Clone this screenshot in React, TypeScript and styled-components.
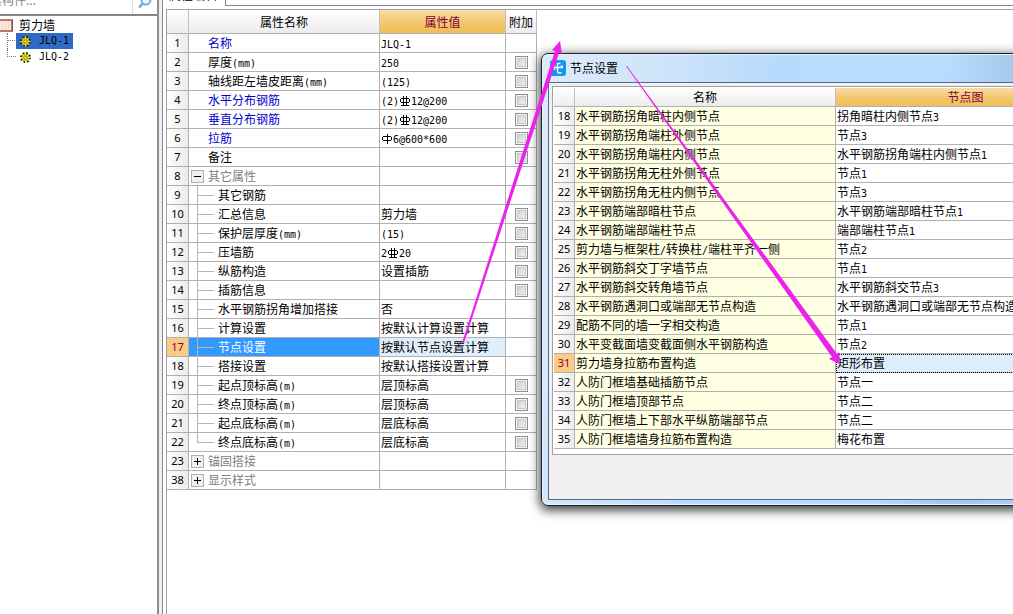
import React from 'react';
import styled, { createGlobalStyle, css } from 'styled-components';

const GlobalStyle = createGlobalStyle`
  * { box-sizing: border-box; }
  html, body, #root { height: 100%; }
  body {
    margin: 0;
    overflow: hidden;
    background: #fff;
    color: #000;
    font: 12px/18px "Noto Sans CJK SC", "Liberation Sans", sans-serif;
  }
`;

const Half = styled.span`
  font-family: "DejaVu Sans Mono", monospace;
  font-size: 10px;
  line-height: 1;
`;

const Symbol = styled.svg`
  width: 12px;
  height: 12px;
  vertical-align: -2px;
  fill: none;
  stroke: currentColor;
  shape-rendering: crispEdges;
`;

const Rebar = ({ grade }: { grade: number }) => (
  <Symbol viewBox="0 0 12 12" role="img" aria-label={`grade ${grade} rebar`}>
    {grade === 1 ? (
      <path d="M2 3.5h8M2 7.5h8M1.5 4v3M10.5 4v3M6.5 1v10" />
    ) : (
      <path d="M2 3.5h8M2 7.5h8M1.5 4v3M10.5 4v3M4.5 1v9M7.5 1v9M2 10.5h8" />
    )}
  </Symbol>
);

/* Half-width characters take half the cell of a Chinese character. "%1" and "%2" stand for the rebar grades. */
const Mixed = ({ text }: { text: string }) => (
  <>
    {text.split(/(%[12]|[\x20-\x7e]+?(?=%|[^\x20-\x7e]|$))/).map((part, i) => {
      if (part === '%1' || part === '%2') return <Rebar key={i} grade={Number(part[1])} />;
      return /^[\x20-\x7e]+$/.test(part) ? <Half key={i}>{part}</Half> : part;
    })}
  </>
);

const Page = styled.div`
  position: relative;
  display: flex;
  height: 100%;
  overflow: hidden;
  background: #f0f0f0;
`;

const Sidebar = styled.aside`
  flex: none;
  width: 159px;
  border-right: 2px solid #8c8c94;
  background: #fff;
`;

const SearchBar = styled.div`
  display: flex;
  height: 16px;
  overflow: hidden;
  align-items: flex-end;
  border-bottom: 2px solid #85858d;
`;

const SearchInput = styled.input`
  flex: 1;
  min-width: 0;
  height: 24px;
  padding: 0 0 6px;
  margin: 0 0 0 -10px;
  border: 0;
  outline: 0;
  font: 12px/18px "Noto Sans CJK SC", sans-serif;
  &::placeholder { color: #808080; opacity: 1; }
`;

const SearchButton = styled.button`
  width: 25px;
  height: 21px;
  padding: 0 0 4px;
  border: 0;
  border-left: 1px solid #ddd;
  background: #fff;
  svg { display: block; margin: 0 auto; }
`;

const Tree = styled.ul`
  margin: 0;
  padding: 1px 0 0;
  list-style: none;
`;

const TreeRow = styled.li`
  display: flex;
  align-items: center;
  height: 16px;
  line-height: 16px;
`;

const RootLabel = styled.span`
  margin-left: 6px;
`;

const Branch = styled.span<{ $last?: boolean }>`
  align-self: ${p => (p.$last ? 'flex-start' : 'stretch')};
  width: 9px;
  height: ${p => (p.$last ? '8px' : 'auto')};
  margin-left: 7px;
  border-left: 1px dotted #777;
  ${p =>
    p.$last
      ? css`border-bottom: 1px dotted #777;`
      : css`background: repeating-linear-gradient(90deg, #777 0 1px, #fff 1px 2px) 0 7px / 100% 1px no-repeat;`}
`;

const TreeItem = styled.span<{ $selected?: boolean }>`
  display: flex;
  align-items: center;
  gap: 8px;
  height: 16px;
  padding: 0 4px;
  background: ${p => (p.$selected ? '#316ac5' : 'transparent')};
`;

const Main = styled.main`
  flex: 1;
  min-width: 0;
  margin-left: 3px;
  border-left: 1px solid #85858d;
  padding-left: 3px;
  background: #fff;
`;

const TabStrip = styled.div`
  display: flex;
  height: 6px;
  overflow: hidden;
  align-items: flex-end;
`;

const Tab = styled.button`
  width: 59px;
  height: 18px;
  padding: 0 0 4px 3px;
  border: 0;
  background: #fff;
  text-align: left;
  font: 12px/14px "Noto Sans CJK SC", sans-serif;
`;

const TabRest = styled.div`
  flex: 1;
  height: 6px;
  border-left: 1px solid #85858d;
  border-bottom: 1px solid #85858d;
`;

const GridFrame = styled.div`
  height: 100%;
  margin-top: 3px;
  border: 1px solid #a0a0a0;
  border-right: 0;
`;

const Grid = styled.table<{ $width: number }>`
  width: ${p => p.$width}px;
  table-layout: fixed;
  border-collapse: separate;
  border-spacing: 0;
`;

const HeadCell = styled.th<{ $gold?: boolean; $tall?: boolean }>`
  height: ${p => (p.$tall ? 24 : 19)}px;
  padding: 0;
  border-right: 1px solid #c0c0c0;
  border-bottom: 1px solid #b0b0b0;
  background: ${p =>
    p.$gold ? 'linear-gradient(#f9dca6, #f3c566 60%, #f0bf58)' : 'linear-gradient(#fff, #ececec)'};
  color: ${p => (p.$gold ? '#800040' : '#000')};
  font-weight: normal;
  line-height: 18px;
  white-space: nowrap;
`;

const NumberCell = styled.th<{ $active?: boolean }>`
  height: 19px;
  padding: 0;
  border-right: 1px solid #b0b0b0;
  border-bottom: 1px solid #b0b0b0;
  background: ${p => (p.$active ? '#fccb83' : 'linear-gradient(90deg, #fff, #ebebeb)')};
  color: ${p => (p.$active ? '#800040' : '#000')};
  font: 11px/18px "Noto Sans", sans-serif;
`;

const Cell = styled.td<{ $tone?: 'yellow' | 'selected' | 'light' | 'focus'; $flush?: boolean }>`
  height: 19px;
  padding: ${p => (p.$flush ? '0' : '0 0 0 1px')};
  border-right: 1px solid #b0b0b0;
  border-bottom: 1px solid #b0b0b0;
  line-height: 18px;
  white-space: nowrap;
  ${p => p.$tone === 'yellow' && css`background: #ffffe1;`}
  ${p => p.$tone === 'selected' && css`background: #3399ff; color: #fff;`}
  ${p => p.$tone === 'light' && css`background: #e0eefc;`}
  ${p => p.$tone === 'focus' && css`background: #deedfa; outline: 1px dotted #000; outline-offset: -1px;`}
`;

const CheckCell = styled(Cell)`
  padding: 0;
  text-align: center;
`;

const Check = styled.input`
  appearance: none;
  display: block;
  width: 13px;
  height: 13px;
  margin: 0 auto;
  border: 1px solid #8e8f8f;
  background: linear-gradient(135deg, #c8ccd0, #f6f6f6);
  box-shadow: inset 0 0 0 1px #f4f4f4, inset 0 0 0 2px #c5c9cd;
`;

const NameLine = styled.div<{ $kind: Kind }>`
  display: flex;
  align-items: center;
  height: 18px;
  padding-left: ${p => (p.$kind === 'plain' || p.$kind === 'blue' ? 19 : 0)}px;
  color: ${p => (p.$kind === 'blue' ? '#0000d0' : p.$kind === 'group' ? '#808080' : 'inherit')};
`;

const Toggle = styled.button`
  width: 13px;
  height: 13px;
  margin: 0 4px 0 2px;
  padding: 0;
  border: 1px solid #b0b0b0;
  background: #f0f0f0;
  svg { display: block; }
`;

const Twig = styled.span<{ $last?: boolean }>`
  align-self: flex-start;
  width: 17px;
  height: ${p => (p.$last ? 10 : 19)}px;
  margin: 0 4px 0 8px;
  border-left: 1px solid #b4b4b4;
  background: linear-gradient(#b4b4b4, #b4b4b4) 0 9px / 100% 1px no-repeat;
`;

const Dialog = styled.section`
  position: absolute;
  left: 541px;
  top: 53px;
  width: 564px;
  padding: 0 6px 5px;
  border: 1px solid #17202b;
  border-radius: 7px;
  background: linear-gradient(100deg, #dcebfa 0, #cfe4fa 120px, #b8dafc 230px, #b9dbfd 400px, #a3c5e8 480px, #b9d7f5);
  box-shadow: inset 0 0 0 1px #e8f4ff, 0 3px 11px 1px rgba(0, 0, 0, 0.8);
`;

const TitleBar = styled.header`
  display: flex;
  align-items: center;
  gap: 4px;
  height: 28px;
  padding-left: 2px;
`;

const Title = styled.h1`
  margin: 0;
  font-size: 12px;
  font-weight: normal;
`;

const DialogBody = styled.div`
  height: 418px;
  padding: 3px;
  border: 1px solid #4d6c8c;
  background: #f0f0f0;
`;

const DialogGrid = styled.div`
  padding: 1px 1px 5px;
  border: 1px solid #a0a0a0;
  background: #fff;
`;

const Arrows = styled.svg`
  position: absolute;
  left: 0;
  top: 0;
  width: 1013px;
  height: 614px;
  pointer-events: none;
`;

type Kind = 'plain' | 'blue' | 'group' | 'child' | 'last';

const properties: [number, string, Kind, string, boolean][] = [
  [1, '名称', 'blue', 'JLQ-1', false],
  [2, '厚度(mm)', 'plain', '250', true],
  [3, '轴线距左墙皮距离(mm)', 'plain', '(125)', true],
  [4, '水平分布钢筋', 'blue', '(2)%212@200', true],
  [5, '垂直分布钢筋', 'blue', '(2)%212@200', true],
  [6, '拉筋', 'blue', '%16@600*600', true],
  [7, '备注', 'plain', '', true],
  [8, '其它属性', 'group', '', false],
  [9, '其它钢筋', 'child', '', false],
  [10, '汇总信息', 'child', '剪力墙', true],
  [11, '保护层厚度(mm)', 'child', '(15)', true],
  [12, '压墙筋', 'child', '2%220', true],
  [13, '纵筋构造', 'child', '设置插筋', true],
  [14, '插筋信息', 'child', '', true],
  [15, '水平钢筋拐角增加搭接', 'child', '否', false],
  [16, '计算设置', 'child', '按默认计算设置计算', false],
  [17, '节点设置', 'child', '按默认节点设置计算', false],
  [18, '搭接设置', 'child', '按默认搭接设置计算', false],
  [19, '起点顶标高(m)', 'child', '层顶标高', true],
  [20, '终点顶标高(m)', 'child', '层顶标高', true],
  [21, '起点底标高(m)', 'child', '层底标高', true],
  [22, '终点底标高(m)', 'last', '层底标高', true],
  [23, '锚固搭接', 'group', '', false],
  [38, '显示样式', 'group', '', false],
];

const nodes: [number, string, string][] = [
  [18, '水平钢筋拐角暗柱内侧节点', '拐角暗柱内侧节点3'],
  [19, '水平钢筋拐角端柱外侧节点', '节点3'],
  [20, '水平钢筋拐角端柱内侧节点', '水平钢筋拐角端柱内侧节点1'],
  [21, '水平钢筋拐角无柱外侧节点', '节点1'],
  [22, '水平钢筋拐角无柱内侧节点', '节点3'],
  [23, '水平钢筋端部暗柱节点', '水平钢筋端部暗柱节点1'],
  [24, '水平钢筋端部端柱节点', '端部端柱节点1'],
  [25, '剪力墙与框架柱/转换柱/端柱平齐一侧', '节点2'],
  [26, '水平钢筋斜交丁字墙节点', '节点1'],
  [27, '水平钢筋斜交转角墙节点', '水平钢筋斜交节点3'],
  [28, '水平钢筋遇洞口或端部无节点构造', '水平钢筋遇洞口或端部无节点构造'],
  [29, '配筋不同的墙一字相交构造', '节点1'],
  [30, '水平变截面墙变截面侧水平钢筋构造', '节点2'],
  [31, '剪力墙身拉筋布置构造', '矩形布置'],
  [32, '人防门框墙基础插筋节点', '节点一'],
  [33, '人防门框墙顶部节点', '节点二'],
  [34, '人防门框墙上下部水平纵筋端部节点', '节点二'],
  [35, '人防门框墙墙身拉筋布置构造', '梅花布置'],
];

const Gear = () => (
  <svg width="11" height="11" viewBox="0 0 11 11" aria-hidden="true">
    <circle cx="5.5" cy="5.5" r="4.5" fill="none" stroke="#222" strokeWidth="2" strokeDasharray="1.77 1.77" />
    <circle cx="5.5" cy="5.5" r="3.7" fill="#f4ef20" stroke="#444400" strokeWidth="0.5" />
    <path d="M5.5 0.500v10M0.500 5.5h10M2 2l7 7M9 2L2 9" stroke="#f4ef20" strokeWidth="1" />
    <circle cx="5.5" cy="5.5" r="1.8" fill="none" stroke="#55551a" strokeWidth="0.8" />
  </svg>
);

const WallIcon = () => (
  <svg width="13" height="13" viewBox="0 0 13 13" aria-hidden="true">
    <rect x="-1" y="1" width="13" height="11" fill="#f7e7dc" stroke="#b77b63" strokeWidth="2" />
    <path d="M2.5 2v9M5.5 2v9M8.5 2v9" stroke="#eccfbf" strokeDasharray="2 1" />
    <path d="M12.5 1v12" stroke="#6f4638" strokeDasharray="2 1" />
  </svg>
);

const DialogIcon = () => (
  <svg width="16" height="16" viewBox="0 0 16 16" aria-hidden="true">
    <rect width="16" height="16" rx="3" fill="#1296ee" />
    <path d="M7.5 3v8q0 2 2 2h2M3.5 7.5h9M5 5.5L3 7.5 5 9.5M10.500 3.5h-3M11 5.500l2 2" fill="none" stroke="#fff" strokeWidth="1.3" />
  </svg>
);

const PropertyGrid = () => (
  <Grid $width={370}>
    <colgroup>
      <col style={{ width: 22 }} />
      <col style={{ width: 191 }} />
      <col style={{ width: 126 }} />
      <col style={{ width: 31 }} />
    </colgroup>
    <thead>
      <tr>
        <HeadCell $tall />
        <HeadCell $tall>属性名称</HeadCell>
        <HeadCell $tall $gold>属性值</HeadCell>
        <HeadCell $tall>附加</HeadCell>
      </tr>
    </thead>
    <tbody>
      {properties.map(([no, name, kind, value, check]) => (
        <tr key={no}>
          <NumberCell scope="row" $active={no === 17}>{no}</NumberCell>
          <Cell $flush $tone={no === 17 ? 'selected' : undefined}>
            <NameLine $kind={kind}>
              {kind === 'group' && (
                <Toggle aria-label={name}>
                  <svg width="11" height="11" viewBox="0 0 11 11">
                    <path d={no === 8 ? 'M2 5.5h7' : 'M2 5.5h7M5.5 2v7'} stroke="#000" />
                  </svg>
                </Toggle>
              )}
              {(kind === 'child' || kind === 'last') && <Twig $last={kind === 'last'} />}
              <span><Mixed text={name} /></span>
            </NameLine>
          </Cell>
          <Cell $tone={no === 17 ? 'light' : undefined}><Mixed text={value} /></Cell>
          <CheckCell>{check && <Check type="checkbox" aria-label={name} />}</CheckCell>
        </tr>
      ))}
    </tbody>
  </Grid>
);

const NodeDialog = () => (
  <Dialog role="dialog" aria-label="节点设置">
    <TitleBar>
      <DialogIcon />
      <Title>节点设置</Title>
    </TitleBar>
    <DialogBody>
      <DialogGrid>
        <Grid $width={542}>
          <colgroup>
            <col style={{ width: 21 }} />
            <col style={{ width: 261 }} />
            <col style={{ width: 260 }} />
          </colgroup>
          <thead>
            <tr>
              <HeadCell />
              <HeadCell>名称</HeadCell>
              <HeadCell $gold>节点图</HeadCell>
            </tr>
          </thead>
          <tbody>
            {nodes.map(([no, name, value]) => (
              <tr key={no}>
                <NumberCell scope="row" $active={no === 31}>{no}</NumberCell>
                <Cell $tone="yellow"><Mixed text={name} /></Cell>
                <Cell $tone={no === 31 ? 'focus' : undefined}><Mixed text={value} /></Cell>
              </tr>
            ))}
          </tbody>
        </Grid>
      </DialogGrid>
    </DialogBody>
  </Dialog>
);

export default function App() {
  return (
    <Page>
      <GlobalStyle />
      <Sidebar>
        <SearchBar>
          <SearchInput aria-label="搜索构件" placeholder="索构件..." />
          <SearchButton aria-label="搜索">
            <svg width="16" height="16" viewBox="0 0 16 16">
              <circle cx="9" cy="6" r="4.5" fill="#eef7fd" stroke="#6fb3dd" strokeWidth="2" />
              <path d="M6 9.5L2 13.5" stroke="#6fb3dd" strokeWidth="2.5" />
            </svg>
          </SearchButton>
        </SearchBar>
        <Tree>
          <TreeRow><WallIcon /><RootLabel>剪力墙</RootLabel></TreeRow>
          <TreeRow><Branch /><TreeItem $selected><Gear /><Mixed text="JLQ-1" /></TreeItem></TreeRow>
          <TreeRow><Branch $last /><TreeItem><Gear /><Mixed text="JLQ-2" /></TreeItem></TreeRow>
        </Tree>
      </Sidebar>
      <Main>
        <TabStrip>
          <Tab>属性编辑</Tab>
          <TabRest />
        </TabStrip>
        <GridFrame>
          <PropertyGrid />
        </GridFrame>
      </Main>
      <NodeDialog />
      <Arrows viewBox="0 0 1013 614" aria-hidden="true">
        <g fill="#ec22ec">
          <path d="M462 343L555 51L552 50L560 41L562 54L559 53L464 343Z" />
          <path d="M626 66L627 66L837 354L839 352L840 364L829 359L832 357Z" />
        </g>
      </Arrows>
    </Page>
  );
}
